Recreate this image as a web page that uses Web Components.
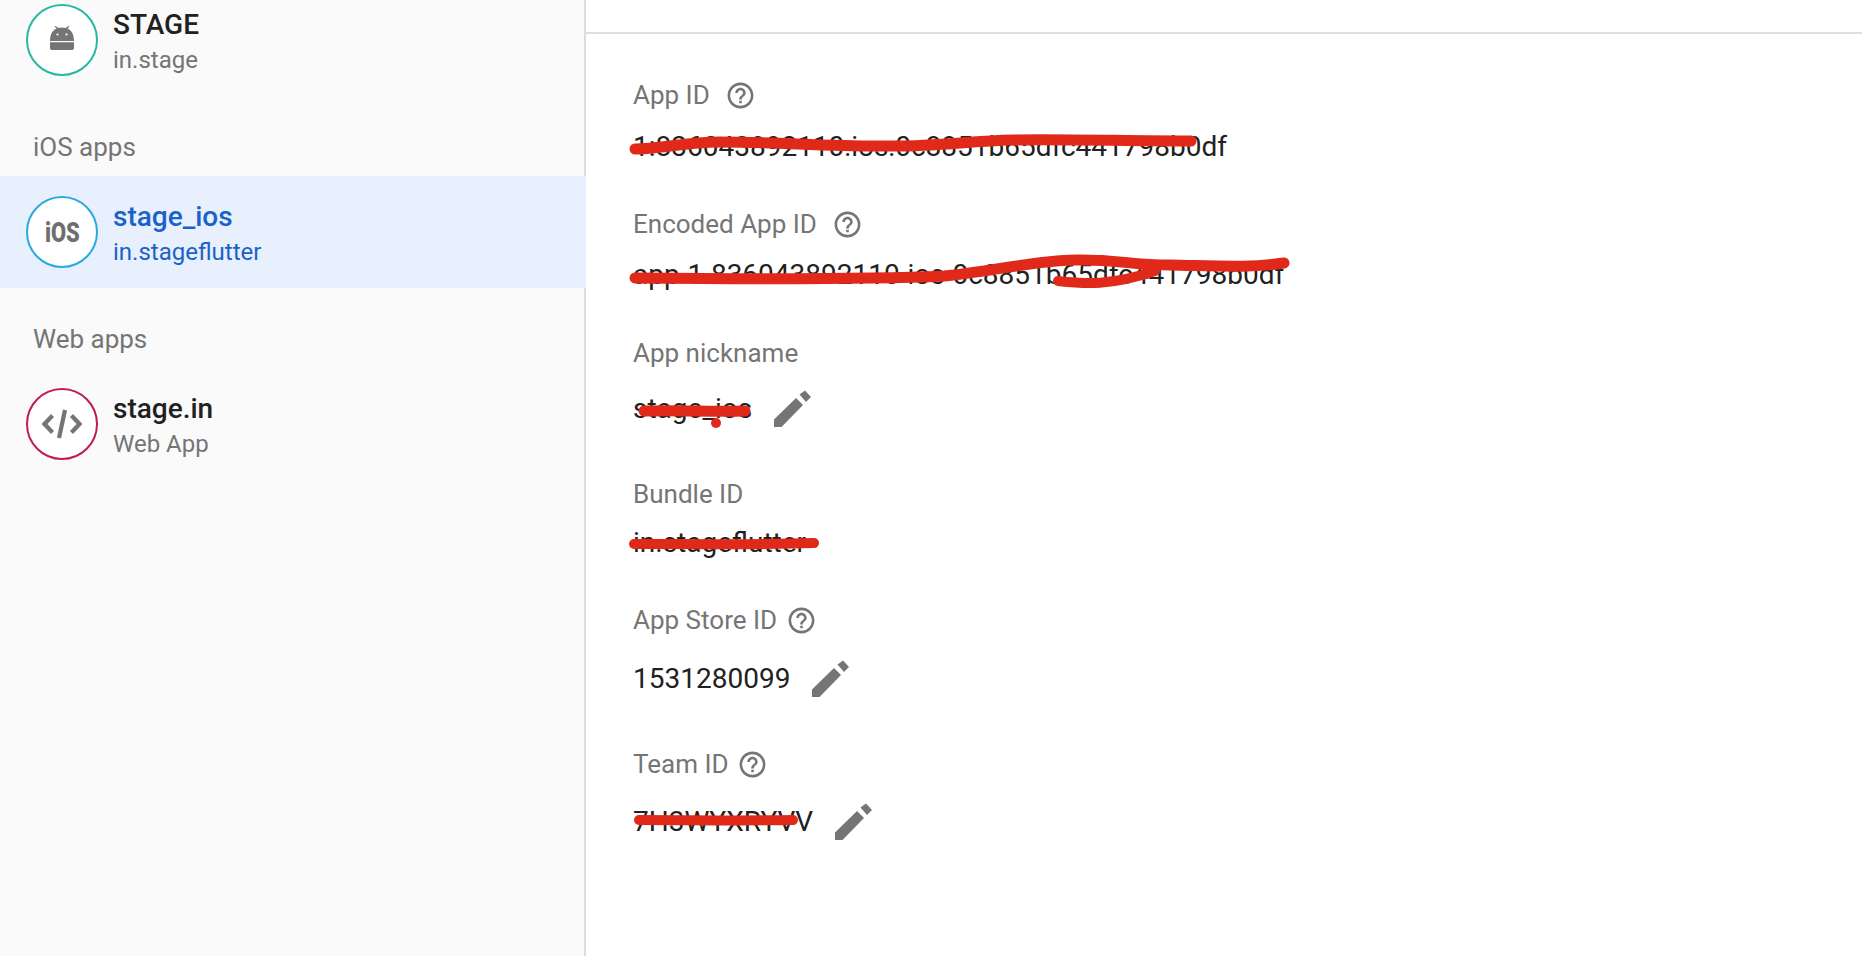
<!DOCTYPE html>
<html>
<head>
<meta charset="utf-8">
<title>Project settings</title>
<style>
    html, body { margin: 0; height: 100%; overflow: hidden; background: #fff; }
    body { font-family: Roboto, "Liberation Sans", sans-serif; }
</style>
</head>
<body>
<settings-page>
    <app-sidebar slot="side">
        <app-row name="STAGE" sub="in.stage" ring="#26b8a0" style="margin-top:-16px">
            <svg viewBox="0 0 24 24" width="24" height="24" style="display:block;transform:translateY(-2px)">
                <path fill="#757575" d="M0 15C0 8 3 4 6.500 2.600L4.500.6 5.500 0l3 2c2-.7 5-.7 7 0l3-2 1 .6-2 2C21 4 24 8 24 15z"/>
                <path fill="#757575" d="M0 16.200h24V22c0 1.100-.9 2-2 2H2c-1.100 0-2-.9-2-2z"/>
                <circle cx="7.500" cy="8.500" r="1.100" fill="#fff"/>
                <circle cx="16.500" cy="8.500" r="1.100" fill="#fff"/>
            </svg>
        </app-row>
        <app-section>iOS apps</app-section>
        <app-row name="stage_ios" sub="in.stageflutter" ring="#29a9e1" selected>
            <span style="font:900 28px Roboto,sans-serif;color:#6f6f6f;display:block;transform:scaleX(.78)">iOS</span>
        </app-row>
        <app-section>Web apps</app-section>
        <app-row name="stage.in" sub="Web App" ring="#c2185b">
            <svg viewBox="0 0 40 32" width="40" height="32">
                <path fill="none" stroke="#757575" stroke-width="4.200" d="M10.500 7.500 2.500 16l8 8.500M29.500 7.500l8 8.500-8 8.500"/>
                <path fill="none" stroke="#757575" stroke-width="4.200" d="M23 2 17 30"/>
            </svg>
        </app-row>
    </app-sidebar>
    <detail-panel slot="main">
        <detail-field label="App ID" help style="--help-gap:15px;--below:42px;--label-gap:15px">1:836043892110:ios:0c8851b65dfc441798b0df</detail-field>
        <detail-field label="Encoded App ID" help style="--help-gap:15px;--below:43px;--label-gap:14px">app-1-836043892110-ios-0c8851b65dfc441798b0df</detail-field>
        <detail-field label="App nickname" edit style="--below:50px;--label-gap:19px;--edit-gap:22px">stage_ios</detail-field>
        <detail-field label="Bundle ID" style="--below:42px;--label-gap:12px">in.stageflutter</detail-field>
        <detail-field label="App Store ID" help edit style="--help-gap:9px;--below:50px;--label-gap:22px;--edit-gap:22px">1531280099</detail-field>
        <detail-field label="Team ID" help edit style="--help-gap:8px;--below:40px;--label-gap:21px;--edit-gap:22px">7H3WYXRYVV</detail-field>
    </detail-panel>
    <redact-marks slot="over"></redact-marks>
</settings-page>

<script>
class SettingsPage extends HTMLElement {
    constructor() {
        super();
        this.attachShadow({ mode: 'open' });
        this.shadowRoot.innerHTML = `
            <style>
                :host { display: flex; width: 1862px; height: 956px; overflow: hidden; position: relative; }
            </style>
            <slot name="side"></slot>
            <slot name="main"></slot>
            <slot name="over"></slot>
        `;
    }
}

class AppSidebar extends HTMLElement {
    constructor() {
        super();
        this.attachShadow({ mode: 'open' });
        this.shadowRoot.innerHTML = `
            <style>
                :host {
                    display: block;
                    flex: none;
                    width: 584px;
                    height: 956px;
                    background: #fafafa;
                    border-right: 2px solid #dcdcdc;
                }
            </style>
            <slot></slot>
        `;
    }
}

class AppSection extends HTMLElement {
    constructor() {
        super();
        this.attachShadow({ mode: 'open' });
        this.shadowRoot.innerHTML = `
            <style>
                :host {
                    display: flex;
                    align-items: flex-end;
                    height: 80px;
                    box-sizing: border-box;
                    padding: 0 0 13px 33px;
                    color: #757575;
                    font-size: 26px;
                    line-height: 32px;
                }
            </style>
            <slot></slot>
        `;
    }
}

class AppRow extends HTMLElement {
    constructor() {
        super();
        this.attachShadow({ mode: 'open' });
        this.shadowRoot.innerHTML = `
            <style>
                :host {
                    display: flex;
                    align-items: center;
                    height: 112px;
                    box-sizing: border-box;
                    padding-left: 26px;
                    gap: 15px;
                    --name: #212121;
                    --sub: #757575;
                }
                /* the selected row runs over the sidebar's border */
                :host([selected]) { background: #e8f0fe; margin-right: -2px; --name: #1a62c9; --sub: #1a62c9; }
                .ring {
                    width: 72px;
                    height: 72px;
                    box-sizing: border-box;
                    border-radius: 50%;
                    border: 2px solid;
                    background: #fff;
                    display: flex;
                    align-items: center;
                    justify-content: center;
                    flex: none;
                }
                .texts { padding-top: 3px; }
                .name { color: var(--name); font-size: 28px; font-weight: 500; line-height: 38px; }
                .sub { color: var(--sub); font-size: 24px; line-height: 33px; }
            </style>
            <div class="ring"><slot></slot></div>
            <div class="texts">
                <div class="name"></div>
                <div class="sub"></div>
            </div>
        `;
    }

    connectedCallback() {
        this.shadowRoot.querySelector('.ring').style.borderColor = this.getAttribute('ring');
        this.shadowRoot.querySelector('.name').textContent = this.getAttribute('name');
        this.shadowRoot.querySelector('.sub').textContent = this.getAttribute('sub');
    }
}

class DetailPanel extends HTMLElement {
    constructor() {
        super();
        this.attachShadow({ mode: 'open' });
        this.shadowRoot.innerHTML = `
            <style>
                :host { display: block; flex: 1; min-width: 0; }
                .bar { height: 32px; border-bottom: 2px solid #e0e0e0; }
                .body { padding: 45px 0 0 47px; }
            </style>
            <div class="bar"></div>
            <div class="body"><slot></slot></div>
        `;
    }
}

const HELP_ICON = `<svg viewBox="0 0 24 24" width="31" height="31"><path fill="#757575" d="M11 18h2v-2h-2v2zm1-16C6.480 2 2 6.480 2 12s4.480 10 10 10 10-4.480 10-10S17.520 2 12 2zm0 18c-4.410 0-8-3.590-8-8s3.590-8 8-8 8 3.590 8 8-3.590 8-8 8zm0-14c-2.210 0-4 1.790-4 4h2c0-1.100.9-2 2-2s2 .9 2 2c0 2-3 1.750-3 5h2c0-2.250 3-2.500 3-5 0-2.210-1.790-4-4-4z"/></svg>`;
const EDIT_ICON = `<svg viewBox="0 0 38 38" width="38" height="38" style="transform:translateY(1px)"><path fill="#757575" d="M0 29.500 22 8l7 7L7.500 37H0z"/><path fill="#757575" d="M25.500 4.500 31 .5l6 6.500-5 5z"/></svg>`;

class DetailField extends HTMLElement {
    constructor() {
        super();
        this.attachShadow({ mode: 'open' });
        this.shadowRoot.innerHTML = `
            <style>
                :host { display: block; margin-bottom: var(--below, 42px); }
                .label {
                    display: flex;
                    align-items: center;
                    height: 32px;
                    gap: var(--help-gap, 18px);
                    color: #757575;
                    font-size: 26px;
                }
                .label svg, .value svg { display: block; flex: none; }
                .value {
                    display: flex;
                    align-items: center;
                    min-height: 40px;
                    gap: var(--edit-gap, 21px);
                    margin-top: var(--label-gap, 15px);
                    color: #212121;
                    font-size: 28px;
                }
            </style>
            <div class="label"><span class="text"></span></div>
            <div class="value"><span><slot></slot></span></div>
        `;
    }

    connectedCallback() {
        const label = this.shadowRoot.querySelector('.label');
        const value = this.shadowRoot.querySelector('.value');
        this.shadowRoot.querySelector('.text').textContent = this.getAttribute('label');
        if (this.hasAttribute('help')) label.insertAdjacentHTML('beforeend', HELP_ICON);
        if (this.hasAttribute('edit')) value.insertAdjacentHTML('beforeend', EDIT_ICON);
    }
}

// marker strokes drawn over the ids, in page coordinates
class RedactMarks extends HTMLElement {
    constructor() {
        super();
        this.attachShadow({ mode: 'open' });
        this.shadowRoot.innerHTML = `
            <style>
                :host { position: absolute; left: 0; top: 0; width: 1862px; height: 956px; pointer-events: none; }
                svg { display: block; }
                path { fill: none; stroke: #e1291a; stroke-linecap: round; stroke-linejoin: round; }
            </style>
            <svg width="1862" height="956" viewBox="0 0 1862 956">
                <path stroke-width="11" d="M635 149C660 149 685 142 720 142 780 142 830 147 894 146 940 146 970 141 1013 140 1060 139 1130 141 1191 141"/>
                <path stroke-width="11" d="M635 278C740 279 880 279 944 276 990 272 1030 261 1075 260 1115 259 1130 265 1170 265 1220 266 1250 268 1284 263"/>
                <path stroke-width="10" d="M1058 281C1085 284 1110 286 1155 271"/>
                <path stroke-width="11" d="M644 411C680 410 710 412 745 411"/>
                <circle cx="716" cy="423" r="5" fill="#e1291a"/>
                <path stroke-width="10" d="M634 544C690 544 760 545 814 543"/>
                <path stroke-width="10" d="M639 820C690 820 740 821 793 820"/>
            </svg>
        `;
    }
}

customElements.define('settings-page', SettingsPage);
customElements.define('app-sidebar', AppSidebar);
customElements.define('app-section', AppSection);
customElements.define('app-row', AppRow);
customElements.define('detail-panel', DetailPanel);
customElements.define('detail-field', DetailField);
customElements.define('redact-marks', RedactMarks);
</script>
</body>
</html>
